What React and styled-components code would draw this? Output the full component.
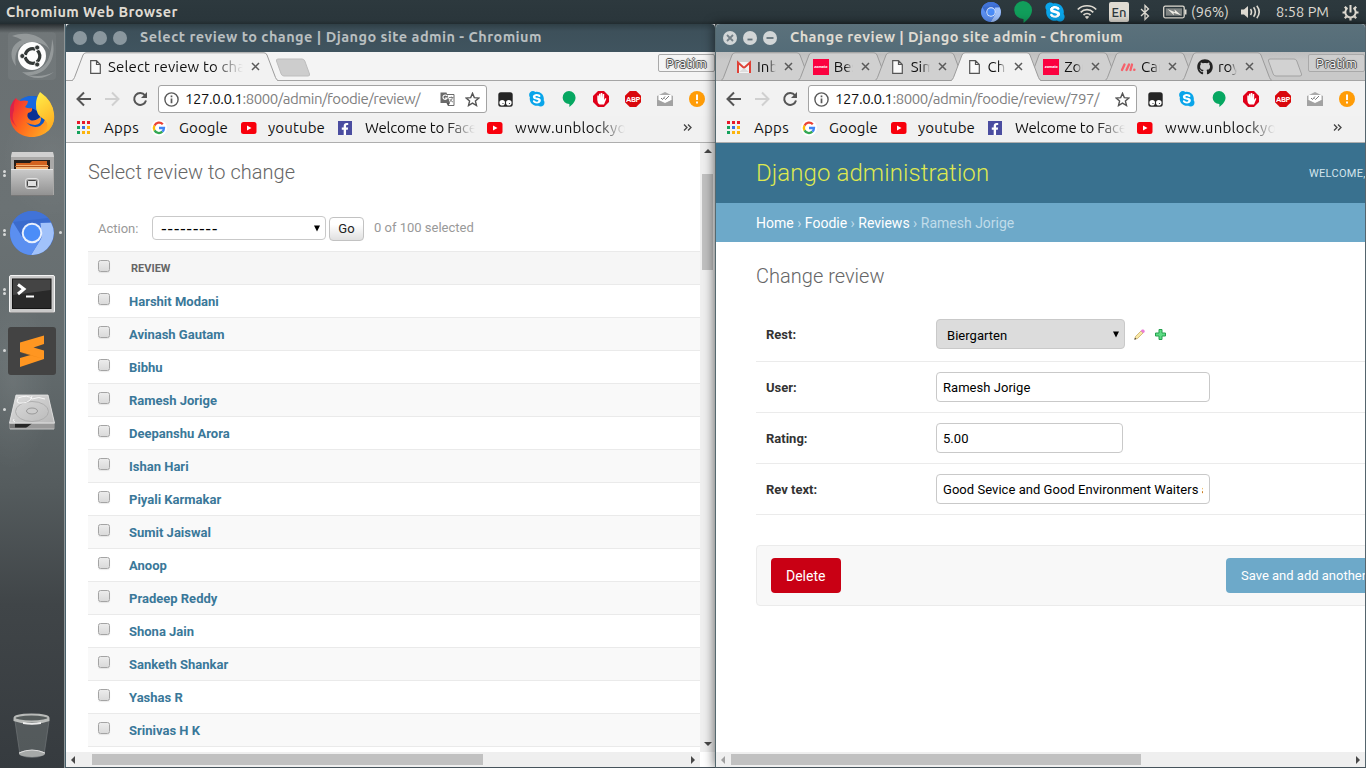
import React, { useLayoutEffect, useRef, useState } from "react";
import styled, { createGlobalStyle, css } from "styled-components";
import { FaGithub, FaSkype, FaFacebookF } from "react-icons/fa";

const ui = `Ubuntu, "Noto Sans", "Open Sans", sans-serif`;
const web = `Roboto, "Liberation Sans", sans-serif`;

const Global = createGlobalStyle`
  * { box-sizing: border-box; }
  html, body { margin: 0; padding: 0; overflow: hidden; }
  svg { display: block; flex: none; }
`;

/* ---------- text that is tracked to a given width ---------- */

const Tracked = styled.span`
  display: inline-block;
  white-space: pre;
  flex: none;
`;

function Track({ width, children }) {
  const ref = useRef(null);
  const [spacing, setSpacing] = useState(0);
  useLayoutEffect(() => {
    const natural = ref.current.getBoundingClientRect().width;
    setSpacing((width - natural) / ref.current.textContent.length);
  }, [width]);
  return (
    <Tracked ref={ref} style={{ letterSpacing: `${spacing}px` }}>
      {children}
    </Tracked>
  );
}

/* ---------- desktop ---------- */

const Desktop = styled.div`
  width: 1366px;
  height: 768px;
  display: flex;
  flex-direction: column;
  overflow: hidden;
  background: #4c5356;
  font-family: ${ui};
`;

const Panel = styled.header`
  height: 24px;
  flex: none;
  display: flex;
  align-items: center;
  padding: 0 7px 0 6px;
  background: linear-gradient(#2d393e, #2a363b 85%, #222c30);
  color: #dfdbd2;
  font-size: 14.5px;
  line-height: 24px;
`;

const PanelTitle = styled.div`
  font-weight: 700;
  flex: 1;
`;

const Indicators = styled.div`
  display: flex;
  align-items: center;
  height: 24px;
`;

const Indicator = styled.div`
  width: ${(p) => p.$w}px;
  flex: none;
  display: flex;
  justify-content: ${(p) => (p.$start ? "flex-start" : "center")};
  margin-right: ${(p) => p.$mr || 0}px;
`;

const LangBadge = styled.div`
  width: 20px;
  height: 20px;
  border-radius: 2px;
  background: #dfdbd2;
  color: #2d383d;
  font-size: 13px;
  font-weight: 500;
  line-height: 20px;
  text-align: center;
`;

const Workspace = styled.div`
  flex: 1;
  min-height: 0;
  display: flex;
`;

const Launcher = styled.nav`
  width: 65px;
  flex: none;
  display: flex;
  flex-direction: column;
  justify-content: space-between;
  padding: 2px 0 3px;
  border-right: 1px solid #8e9496;
  background:
    linear-gradient(rgba(20, 25, 28, 0.75), transparent 9px),
    radial-gradient(40px 90px at 20% 48%, rgba(255, 255, 255, 0.07), transparent),
    radial-gradient(50px 60px at 80% 18%, rgba(255, 255, 255, 0.05), transparent),
    linear-gradient(#6a7072, #6b7274 25%, #636b6d 45%, #555c5e 62%, #404548 78%, #363b3f);
`;

const LauncherGroup = styled.div`
  display: flex;
  flex-direction: column;
`;

const LauncherSlot = styled.div`
  height: 59px;
  width: 64px;
  display: flex;
  align-items: center;
`;

const Pips = styled.div`
  width: 8px;
  display: flex;
  flex-direction: column;
  align-items: flex-end;
  gap: 0.5px;
  padding-right: 2px;
`;

const Pip = styled.i`
  width: 3.5px;
  height: 3.5px;
  border-radius: 50%;
  background: #d6d8d8;
  display: block;
`;

/* ---------- browser window ---------- */

const Window = styled.section`
  width: ${(p) => (p.$active ? 651 : 650)}px;
  flex: none;
  display: flex;
  flex-direction: column;
  border-left: 1px solid #47606b;
  border-bottom: 1px solid #46535b;
  background: #f1f1f1;
  ${(p) =>
    p.$active &&
    css`
      border-right: 1px solid #55656d;
      border-left-color: #55696f;
      position: relative;
      box-shadow: -1px 0 11px rgba(0, 0, 0, 0.55);
      border-radius: 4px 4px 0 0;
    `}
`;

const TitleBar = styled.div`
  height: 28px;
  flex: none;
  display: flex;
  align-items: center;
  padding-left: 7px;
  gap: 6px;
  background: ${(p) =>
    p.$active ? "linear-gradient(#5b717b, #546c78)" : "linear-gradient(#2f3f46, #3d505a 25%, #40545f)"};
  color: ${(p) => (p.$active ? "#dfdbd2" : "#b9bfc0")};
  border-radius: 4px 4px 0 0;
  font-size: 14.5px;
  font-weight: 700;
  line-height: 26px;
`;

const TitleText = styled.div`
  margin: 0 0 2px 7px;
`;

const TabStrip = styled.div`
  height: 29px;
  flex: none;
  display: flex;
  align-items: flex-start;
  padding-left: ${(p) => (p.$active ? 5 : 6)}px;
  background: ${(p) => (p.$active ? "linear-gradient(#bfbfbf, #c9c9c9 30%)" : "#f4f4f4")};
  box-shadow: inset 0 -1px #a5a5a5;
`;

const TabBox = styled.div`
  width: ${(p) => p.$w}px;
  height: 29px;
  flex: none;
  position: relative;
  z-index: ${(p) => (p.$front ? 3 : 1)};
  margin-right: -13.2px;
  display: flex;
  align-items: center;
  padding: 0 17px 0 15px;
`;

const TabShape = styled.svg`
  position: absolute;
  left: 0;
  top: 0;
  z-index: -1;
`;

const TabIcon = styled.div`
  width: 16px;
  height: 16px;
  flex: none;
  display: flex;
  align-items: center;
  justify-content: center;
  margin-right: 5px;
`;

const fade = (px) => css`
  mask-image: linear-gradient(to left, transparent, #000 ${px}px);
`;

const TabLabel = styled.div`
  flex: 1;
  overflow: hidden;
  font-size: 15px;
  line-height: 29px;
  color: #111;
  white-space: nowrap;
  ${(p) => fade(p.$wide ? 30 : 8)}
`;

const TabClose = styled.div`
  width: 18px;
  display: flex;
  justify-content: flex-end;
  padding-right: 1px;
`;

const NewTabWrap = styled.div`
  margin: 6px 0 0 ${(p) => (p.$active ? 8 : 10)}px;
`;

const ProfileButton = styled.div`
  width: 57px;
  height: 18px;
  margin: 2px 0 0 auto;
  border: 1px solid #a9a9a9;
  border-radius: 2px;
  background: ${(p) => (p.$active ? "#cecece" : "#f5f5f5")};
  color: #fafafa;
  font-size: 13px;
  line-height: 17px;
  padding-left: 7px;
  text-shadow: -1px 0 #555, 1px 0 #555, 0 -1px #555, 0 1px #555, 0 0 2px #444;
`;

const NavBar = styled.div`
  height: 35px;
  flex: none;
  display: flex;
  align-items: center;
  padding: 1px 0 0 4px;
  background: #f2f2f2;
`;

const NavButton = styled.div`
  width: 28px;
  display: flex;
  justify-content: center;
`;

const UrlBox = styled.div`
  width: 329px;
  height: 28px;
  margin: 0 2px 0 4px;
  border: 1px solid #a3a3a3;
  border-radius: 3px;
  background: #fff;
  display: flex;
  align-items: center;
  padding: 0 6px 0 5px;
  font-size: 15px;
  line-height: 26px;
  color: #808080;
`;

const UrlText = styled.div`
  flex: 1;
  margin-left: 6px;
  white-space: nowrap;
  b { color: #111; font-weight: 400; }
`;

const UrlActions = styled.div`
  display: flex;
  gap: 10px;
`;

const Extension = styled.div`
  width: 32px;
  display: flex;
  justify-content: center;
`;

const BookmarkBar = styled.div`
  height: 27px;
  flex: none;
  display: flex;
  align-items: center;
  padding: 0 0 3px 11px;
  background: #f1f1f1;
  border-bottom: 1px solid #aeaeae;
  font-size: 15px;
  line-height: 24px;
  color: #111;
`;

const Bookmark = styled.div`
  width: ${(p) => p.$w}px;
  flex: none;
  display: flex;
  align-items: center;
`;

const BookmarkLabel = styled.div`
  margin-left: ${(p) => p.$gap}px;
  overflow: hidden;
  ${(p) =>
    p.$clip &&
    css`
      width: ${p.$clip}px;
      ${fade(28)}
    `}
`;

const Viewport = styled.div`
  flex: 1;
  min-height: 0;
  display: flex;
  background: #fff;
  overflow: hidden;
  font-family: ${web};
`;

const Page = styled.main`
  flex: 1;
  min-width: 0;
  overflow: hidden;
`;

const VScroll = styled.div`
  width: 15px;
  flex: none;
  background: #efefef;
  display: flex;
  flex-direction: column;
  align-items: center;
  padding: 5px 0 5px;
`;

const VThumb = styled.div`
  width: 11px;
  height: 96px;
  margin: 20px 0 auto;
  background: #c1c1c1;
`;

const HScroll = styled.div`
  height: 15px;
  flex: none;
  display: flex;
  align-items: center;
  background: #efefef;
  padding: 0 4px;
  margin-right: ${(p) => p.$corner}px;
`;

const HScrollRow = styled.div`
  flex: none;
  background: #fff;
`;

const HThumb = styled.div`
  width: ${(p) => p.$w}px;
  height: 11px;
  margin: 0 auto 0 ${(p) => p.$ml}px;
  background: #c1c1c1;
`;

/* ---------- admin pages ---------- */

const Heading = styled.h1`
  margin: 0;
  font-size: 20px;
  font-weight: 300;
  line-height: 24px;
  letter-spacing: 0.02px;
  color: #666;
`;

const ListPage = styled.div`
  padding: 17px 0 0 22px;
`;

const Actions = styled.div`
  height: 67px;
  display: flex;
  align-items: flex-start;
  padding: 32px 0 0 10px;
  font-size: 13px;
  color: #999;
`;

const ActionLabel = styled.span`
  width: 54px;
  line-height: 26px;
`;

const ActionSelect = styled.div`
  width: 174px;
  height: 24px;
  border: 1px solid #c9c9c9;
  border-radius: 4px;
  display: flex;
  align-items: center;
  justify-content: space-between;
  padding: 0 5px 0 8px;
  color: #000;
`;

const Dashes = styled.span`
  font: 16px/22px "DejaVu Sans", sans-serif;
  padding-top: 1px;
`;

const GoButton = styled.button`
  width: 35px;
  height: 24px;
  margin: 1px 0 0 3px;
  padding: 0 0 2px;
  border: 1px solid #c2c2c2;
  border-radius: 4px;
  background: linear-gradient(#fff 30%, #e0e0e0);
  color: #222;
  font: 13px ${web};
`;

const Counter = styled.span`
  margin-left: 10px;
  line-height: 24px;
`;

const HeadRow = styled.div`
  height: 34px;
  border-top: 1px solid #eaeaea;
  border-bottom: 1px solid #eaeaea;
  background: #f6f6f6;
  display: flex;
  align-items: flex-start;
  padding: 8px 0 0 10px;
  color: #666;
  font-size: 11px;
  font-weight: 700;
  line-height: 17px;
`;

const Row = styled.div`
  height: 33px;
  border-bottom: 1px solid #eaeaea;
  background: ${(p) => (p.$odd ? "#fff" : "#f9f9f9")};
  display: flex;
  padding: 8px 0 0 10px;
  color: #3a7899;
  font-size: 13px;
  font-weight: 700;
  line-height: 17px;
`;

const Checkbox = styled.span`
  width: 12px;
  height: 12px;
  margin-right: ${(p) => p.$mr}px;
  flex: none;
  border: 1px solid #a4a4a4;
  border-radius: 2.5px;
  background: linear-gradient(#ececec, #dadada);
  box-shadow: 0 1px 1px rgba(0, 0, 0, 0.08);
`;

const AdminHeader = styled.div`
  height: 60px;
  background: #39718f;
  display: flex;
  align-items: center;
  padding-left: 40px;
  overflow: hidden;
`;

const Brand = styled.div`
  width: 553px;
  flex: none;
  font-size: 24px;
  font-weight: 300;
  letter-spacing: 0.08px;
  color: #dfe94f;
  line-height: 28px;
`;

const UserTools = styled.div`
  font-size: 11px;
  letter-spacing: 0.3px;
  color: #d3e4ec;
  white-space: nowrap;
`;

const Crumbs = styled.div`
  height: 39px;
  background: #6da9c9;
  padding-left: 40px;
  font-size: 14px;
  line-height: 40px;
  color: #c0dcea;
  b { font-weight: 400; color: #fff; }
`;

const FormPage = styled.div`
  padding: 22px 0 0 40px;
`;

const FormRows = styled.div`
  margin: 21px 0 30px;
`;

const FormRow = styled.div`
  height: ${(p) => (p.$first ? 53 : 51)}px;
  border-bottom: 1px solid #ebebeb;
  display: flex;
  align-items: center;
  padding: 0 0 ${(p) => (p.$first ? 2 : 0)}px 10px;
`;

const Label = styled.label`
  width: 170px;
  font-size: 13px;
  font-weight: 700;
  color: #333;
`;

const Field = styled.div`
  width: ${(p) => p.$w}px;
  height: 30px;
  border: 1px solid #c9c9c9;
  border-radius: 4px;
  padding: 0 6px;
  font-size: 13px;
  letter-spacing: 0.04px;
  line-height: 29px;
  color: #000;
`;

const FieldText = styled.div`
  overflow: hidden;
  white-space: nowrap;
`;

const SelectField = styled(Field)`
  background: #dcdcdc;
  display: flex;
  justify-content: space-between;
  padding: 1px 5px 0 10px;
  margin-right: 9px;
`;

const SelectArrow = styled.span`
  padding-top: 10px;
`;

const RelatedIcons = styled.div`
  display: flex;
  align-items: center;
  gap: 10px;
`;

const SubmitRow = styled.div`
  width: 700px;
  height: 61px;
  border: 1px solid #ebebeb;
  border-radius: 4px;
  background: #f8f8f8;
  display: flex;
  padding: 12px 14px;
`;

const SubmitButton = styled.button`
  width: ${(p) => p.$w}px;
  height: 35px;
  flex: none;
  padding: 0 0 0 15px;
  border: 0;
  border-radius: 4px;
  text-align: left;
  white-space: nowrap;
  background: ${(p) => (p.$danger ? "#c90014" : "#6da9c9")};
  color: #fff;
  font: ${(p) => (p.$danger ? 14 : 13)}px ${web};
  margin-right: 385px;
`;

/* ---------- icons ---------- */

const Chromium = ({ size }) => (
  <svg width={size} height={size} viewBox="0 0 44 44">
    <circle cx="22" cy="22" r="22" fill="#3f70d4" />
    <path d="M3 11A22 22 0 0 1 41 11L22 12L14 28Z" fill="#4674d4" />
    <path d="M3 11A22 22 0 0 1 41 11.5L22 11.5L12 17Z" fill="#4173d8" />
    <path d="M41 11.5A22 22 0 0 1 21 44L32 26L30.5 12Z" fill="#a1c2fa" />
    <path d="M3 11A22 22 0 0 0 21 44L31 28L13 27Z" fill="#5b8ff0" />
    <path d="M3 11L14 29L13 19L22 11.5H41L38 7Z" fill="#3564c4" opacity=".55" />
    <circle cx="22" cy="22" r="10.3" fill="#eaf1fd" />
    <circle cx="22" cy="22" r="8.3" fill="#4b8df8" />
  </svg>
);

const Hangouts = ({ w = 18, h = 22, color = "#119e5b" }) => (
  <svg width={w} height={h} viewBox="0 0 18 22">
    <path d="M9 0a9 9 0 0 1 9 9c0 5.500-4 9.500-8.500 13v-4A9 9 0 0 1 9 0Z" fill={color} />
  </svg>
);

const SkypeWrap = styled.div`
  width: ${(p) => p.$s}px;
  height: ${(p) => p.$s}px;
  display: flex;
  align-items: center;
  justify-content: center;
  color: #0aa5ea;
  background: radial-gradient(circle, #fff 42%, transparent 45%);
`;
const Skype = ({ s }) => (
  <SkypeWrap $s={s}>
    <FaSkype size={s * 1.1} />
  </SkypeWrap>
);

const Wifi = () => (
  <svg width="20" height="16" viewBox="0 0 20 16" fill="none" stroke="#dfdbd2" strokeWidth="1.700">
    <path d="M.8 5.500C5.500.5 14.500.5 19.200 5.500M3.700 8.300C7.200 4.800 12.800 4.800 16.300 8.300M6.500 11C8.500 9.200 11.500 9.200 13.500 11" />
    <path d="M10 15.200L7.800 12.800Q10 11.300 12.200 12.800Z" fill="#dfdbd2" stroke="none" />
  </svg>
);

const Bluetooth = () => (
  <svg width="10" height="17" viewBox="0 0 10 17" fill="none" stroke="#dfdbd2" strokeWidth="1.300">
    <path d="M1 5L8.500 12L5 15.500V1.500L8.500 5L1 12" />
  </svg>
);

const Battery = () => (
  <svg width="24" height="14" viewBox="0 0 24 14">
    <rect x=".7" y="1.200" width="20.500" height="11.600" rx="1.500" fill="none" stroke="#dfdbd2" strokeWidth="1.300" />
    <path d="M22 4.500h1.500v5H22z" fill="#dfdbd2" />
    <path d="M2.800 3.300H19V10.700H2.800z" fill="#7f8483" />
    <path d="M4.500 4L12 7.300L11.500 4.500L18.500 10.500L10.500 7.800L11 10.200Z" fill="#f1eee6" />
  </svg>
);

const Sound = () => (
  <svg width="20" height="16" viewBox="0 0 20 16" fill="none" stroke="#dfdbd2" strokeWidth="1.600">
    <path d="M0 5.500H3L7 2V14L3 10.500H0Z" fill="#dfdbd2" stroke="none" />
    <path d="M9.500 5Q11.500 8 9.500 11M12.600 3.300Q16 8 12.600 12.700M15.800 1.800Q20.600 8 15.800 14.200" />
  </svg>
);

const Gear = () => (
  <svg width="17" height="17" viewBox="0 0 17 17" fill="none" stroke="#dfdbd2">
    <path d="M5.500 4A5.200 5.200 0 1 0 11.500 4" strokeWidth="2" />
    <path d="M8.500 1V8.500" strokeWidth="2" />
    <path d="M.5 8.500H3M14 8.500H16.500M2.800 2.800L4.600 4.600M14.200 2.800L12.400 4.600M2.800 14.200L4.600 12.400M14.200 14.200L12.400 12.400M8.500 14V16.500" strokeWidth="2.200" />
  </svg>
);

const UbuntuIcon = () => (
  <svg width="48" height="48" viewBox="0 0 48 48">
    <rect width="48" height="48" rx="4" fill="#fff" opacity=".05" />
    <path d="M4 4C20-2 40 4 43 23Q42 12 26 10C12 9 5 20 8 34C0 24 3 12 14 8Q9 5 4 4Z" fill="#fff" opacity=".25" />
    <path d="M44 7C50 26 38 44 20 43Q34 46 46 40Q30 52 14 40Q32 42 40 28Q44 18 44 7Z" fill="#fff" opacity=".25" />
    <circle cx="24" cy="24" r="14" fill="#fdfdfd" />
    <circle cx="24.500" cy="24" r="7.300" fill="none" stroke="#333837" strokeWidth="3.200" strokeDasharray="13.300 2" strokeDashoffset="-1" transform="rotate(60 24.500 24)" />
    <g fill="#333837" stroke="#fdfdfd" strokeWidth=".8">
      <circle cx="14.300" cy="24" r="2.500" />
      <circle cx="29.200" cy="15.500" r="2.500" />
      <circle cx="29.200" cy="32.500" r="2.500" />
    </g>
  </svg>
);

const Firefox = () => (
  <svg width="48" height="48" viewBox="0 0 48 48">
    <defs>
      <linearGradient id="fx" x1="0" y1="0.200" x2="1" y2=".8">
        <stop offset="0" stopColor="#f0203c" />
        <stop offset=".45" stopColor="#ff6a1c" />
        <stop offset="1" stopColor="#ffb526" />
      </linearGradient>
      <linearGradient id="fy" x1="0" y1="0" x2=".3" y2="1">
        <stop offset="0" stopColor="#fff04a" />
        <stop offset="1" stopColor="#ffae22" />
      </linearGradient>
    </defs>
    <circle cx="24.500" cy="22" r="17" fill="#0b56c8" />
    <path d="M24 5A18 18 0 0 1 36 10L33 26L24 33L16 18L12 9Q17 5 24 5Z" fill="#1768e0" />
    <path d="M22 17Q30 18 32 26L25 31L17 24Z" fill="#0a2f94" />
    <path d="M8 7Q9 9 12 10Q16 9 20 10Q20 13 17 16Q20 18 24 17Q25 21 20 22Q18 26 22 29Q26 31 33 26Q34 33 27 34Q20 33 18 31Q24 38 32 35Q40 30 37 17L32 2Q44 9 46 23C48 36 37 46 24 46C10 46 2 36 2 25Q1 13 8 7Z" fill="url(#fx)" />
    <path d="M32 1Q45 10 46 23Q47 36 37 42Q42 34 37 29Q27 24 28 13Q28 7 32 1Z" fill="url(#fy)" />
    <path d="M8 7Q5 13 6 19Q2 28 9 36Q3 31 2 25Q1 13 8 7Z" fill="#d31c50" opacity=".7" />
  </svg>
);

const Files = () => (
  <svg width="48" height="48" viewBox="0 0 48 48">
    <defs>
      <linearGradient id="fi" x1="0" y1="0" x2="0" y2="1">
        <stop offset="0" stopColor="#c8c8c8" />
        <stop offset="1" stopColor="#929292" />
      </linearGradient>
    </defs>
    <path d="M4 2H45L46 7V45H3V7Z" fill="#aaa9a8" />
    <path d="M4 2H45L46 7H3Z" fill="#d0d0d0" />
    <path d="M6 10H42V20H6Z" fill="#271f1b" />
    <path d="M8 13H22L24 11H39V18H8Z" fill="#d2621f" />
    <path d="M8 15H40V20H8Z" fill="#f5b577" />
    <path d="M7 16H41V17H7Z" fill="#b5521a" />
    <path d="M3 20H45V45H3Z" fill="url(#fi)" />
    <path d="M3 19.500H45" stroke="#e5e5e5" />
    <rect x="17.500" y="28.500" width="13" height="10" rx="2.500" fill="#aaa" stroke="#e2e2e2" />
    <rect x="19.500" y="30.500" width="9" height="6" rx="1" fill="#e0e0e0" stroke="#444" />
    <path d="M3 45.500H45" stroke="#777" />
  </svg>
);

const Terminal = () => (
  <svg width="48" height="48" viewBox="0 0 48 48">
    <rect x="1.500" y="7.500" width="45" height="37" rx="1.500" fill="#c9c9c9" stroke="#f4f4f4" />
    <rect x="4.500" y="11" width="38.500" height="29.500" fill="#292929" stroke="#141414" />
    <path d="M5 11.500H42.500V22L5 27Z" fill="#4b4b4b" opacity=".8" />
    <path d="M10 16.500L16 21L10 26" fill="none" stroke="#fff" strokeWidth="3" />
    <path d="M18 28.500H26" stroke="#fff" strokeWidth="2" />
    <path d="M2 44.500H46" stroke="#999" />
  </svg>
);

const Sublime = () => (
  <svg width="48" height="48" viewBox="0 0 48 48">
    <rect width="48" height="48" rx="3" fill="#434343" />
    <path d="M12 15.500L36 8.500V17L25.500 20.500L36 23.500V32L12 40V31L22.500 28L12 25Z" fill="#ff9621" />
    <path d="M22.500 28L36 32L12 25.500Z" fill="#e98410" />
  </svg>
);

const Disk = () => (
  <svg width="48" height="48" viewBox="0 0 48 48">
    <defs>
      <linearGradient id="dk" x1="0" y1="0" x2="1" y2="1">
        <stop offset="0" stopColor="#dedede" />
        <stop offset="1" stopColor="#b8b8b8" />
      </linearGradient>
    </defs>
    <path d="M8 9H40L46.500 37V43H1.500V37Z" fill="#a5a5a5" />
    <path d="M8 9H40L46.500 37H1.500Z" fill="url(#dk)" stroke="#e6e6e6" strokeWidth=".8" />
    <ellipse cx="24" cy="25.500" rx="16.500" ry="10" fill="none" stroke="#aaa" strokeWidth=".9" />
    <ellipse cx="24" cy="25" rx="5.500" ry="3" fill="#ccc" stroke="#999" />
    <path d="M10 12Q20 8 24 13Q31 10 37 13M10 13Q7 18 15 17Q23 16 24 10M6 33Q4 35 7 36" stroke="#fafafa" fill="none" strokeWidth=".9" />
    <path d="M2 37.500H46V42.500H2Z" fill="#777" />
    <path d="M7 37.500H24V41.500H7Z" fill="#272727" />
    <path d="M24 37.500H46V42H18Z" fill="#999" />
    <path d="M1.500 37.300H46.500M2 43H46" stroke="#ddd" strokeWidth=".8" />
  </svg>
);

const Trash = () => (
  <svg width="48" height="48" viewBox="0 0 48 48">
    <path d="M7 9L12 43Q24 48 36 43L41 9Z" fill="#89908f" opacity=".35" stroke="#c7cbcb" strokeWidth=".8" />
    <ellipse cx="24" cy="41.500" rx="13" ry="3.500" fill="#a6a9a8" />
    <path d="M11 41Q24 35 37 41" fill="none" stroke="#ddd" />
    <ellipse cx="23.500" cy="6" rx="17" ry="3.500" fill="#555b5b" stroke="#b8bab8" strokeWidth="2" />
    <path d="M5.500 6.500Q24 15 41.500 6.500V9Q24 15.500 5.500 9Z" fill="#babcba" />
    <path d="M15 10Q24 12 33 10V12Q24 13.500 15 12Z" fill="#ececec" />
  </svg>
);

const WinButton = ({ kind, active }) => (
  <svg width="14" height="14" viewBox="0 0 14 14">
    <circle cx="7" cy="7" r="7" fill={active ? "#d2d6d7" : "#8a979e"} />
    {active && kind === "x" && <path d="M4 4L10 10M10 4L4 10" stroke="#748188" strokeWidth="1.800" />}
    {active && kind === "min" && <path d="M4.500 8.500H9.500" stroke="#63737b" strokeWidth="1.800" />}
    {active && kind === "max" && <path d="M3.500 7H10.500" stroke="#63737b" strokeWidth="1.800" />}
  </svg>
);

const PageGlyph = () => (
  <svg width="11" height="14" viewBox="0 0 11 14" fill="none" stroke="#555" strokeWidth="1.200">
    <path d="M.7.7H6.500L10.300 4.500V13.300H.7ZM6.500.7V4.500H10.300" fill="#fafafa" />
  </svg>
);

const Gmail = () => (
  <svg width="16" height="16" viewBox="0 0 16 16">
    <path d="M1 3H15V14H1Z" fill="#f3f3f3" />
    <path d="M2 14V3.500L8 9L14 3.500V14" fill="none" stroke="#df4237" strokeWidth="2" />
    <path d="M3 13L8 9L13 13Z" fill="#ddd" />
  </svg>
);

const ZomatoBox = styled.div`
  width: 16px;
  height: 16px;
  background: #fb0140;
  color: #fff;
  font: italic 700 4px/15px ${web};
  text-align: center;
`;
const Zomato = () => <ZomatoBox>zomato</ZomatoBox>;

const Slashes = () => (
  <svg width="16" height="16" viewBox="0 0 16 16">
    <path d="M2 11L4.500 5.500M6.500 11L9 5.500M10.500 11L12 5.500" stroke="#f5616b" strokeWidth="2.300" strokeLinecap="round" />
    <circle cx="14.300" cy="10.800" r="1.300" fill="#f5616b" />
  </svg>
);

const CloseGlyph = () => (
  <svg width="9" height="9" viewBox="0 0 9 9">
    <path d="M1 1L8 8M8 1L1 8" stroke="#5a5a5a" strokeWidth="1.500" />
  </svg>
);

const Back = ({ color = "#555" }) => (
  <svg width="16" height="16" viewBox="0 0 16 16" fill="none" stroke={color} strokeWidth="2">
    <path d="M15 8H2M8 1.500L1.500 8L8 14.500" />
  </svg>
);
const Forward = () => (
  <svg width="16" height="16" viewBox="0 0 16 16" fill="none" stroke="#d0d0d0" strokeWidth="2">
    <path d="M1 8H14M8 1.500L14.500 8L8 14.500" />
  </svg>
);
const Reload = () => (
  <svg width="16" height="16" viewBox="0 0 16 16">
    <path d="M13 4.300A6 6 0 1 0 14 9.500" fill="none" stroke="#555" strokeWidth="2" />
    <path d="M15 1V7H9Z" fill="#555" />
  </svg>
);
const Info = () => (
  <svg width="15" height="15" viewBox="0 0 15 15">
    <circle cx="7.500" cy="7.500" r="6.600" fill="none" stroke="#5a5a5a" strokeWidth="1.400" />
    <path d="M7.500 6.500V11.300M7.500 3.500V5.200" stroke="#5a5a5a" strokeWidth="1.700" />
  </svg>
);
const Star = () => (
  <svg width="15" height="15" viewBox="0 0 15 15">
    <path d="M7.500 1.300L9.300 5.600L13.900 6L10.400 9L11.500 13.500L7.500 11.100L3.500 13.500L4.600 9L1.100 6L5.700 5.600Z" fill="none" stroke="#555" strokeWidth="1.400" />
  </svg>
);
const Translate = () => (
  <svg width="15" height="15" viewBox="0 0 15 15">
    <path d="M5 2.500H14V13.500H8" fill="#fff" stroke="#6a6a6a" />
    <path d="M.5.500H6.500L10 11H.5Z" fill="#6a6a6a" />
    <path d="M7 3.900A2.200 2.200 0 1 0 7.200 6H5" fill="none" stroke="#fff" strokeWidth="1.100" />
    <path d="M9 5.500H13.500M11.300 4.500V5.500M12.500 5.500Q12 8.500 9.500 10M9.800 7Q11 9.500 13 10" fill="none" stroke="#777" strokeWidth=".9" />
    <path d="M6.500 11H10L8 14Z" fill="#555" />
  </svg>
);

const Tamper = () => (
  <svg width="15" height="15" viewBox="0 0 15 15">
    <rect x=".3" y=".3" width="14.400" height="14.400" rx="2.500" fill="#252525" />
    <circle cx="4.200" cy="10.800" r="2.800" fill="#fff" />
    <circle cx="10.800" cy="10.800" r="2.800" fill="#fff" />
    <circle cx="5" cy="11.500" r=".6" fill="#252525" />
    <circle cx="11.500" cy="11.500" r=".6" fill="#252525" />
  </svg>
);
const Hand = () => (
  <svg width="16" height="16" viewBox="0 0 16 16">
    <path d="M5 0H11L16 5V11L11 16H5L0 11V5Z" fill="#e00019" />
    <path d="M4.300 9V4.500H5.800V7.500L6 2.800H7.500V7L7.800 2H9.300V7L9.700 3H11.200V9L12.300 7L13.400 7.700L11 13.500H6.500Q4.300 12 4.300 9Z" fill="#fff" />
  </svg>
);
const AbpBox = styled.div`
  width: 16px;
  height: 16px;
  clip-path: polygon(30% 0, 70% 0, 100% 30%, 100% 70%, 70% 100%, 30% 100%, 0 70%, 0 30%);
  background: #d9070c;
  color: #fff;
  font: 700 7.5px/16px ${ui};
  text-align: center;
  letter-spacing: -0.4px;
`;
const MailCheck = () => (
  <svg width="16" height="14" viewBox="0 0 16 14">
    <path d="M0 4L8 0L16 4V14H0Z" fill="#aaa" />
    <path d="M1.500 3H14.500V8L8 11L1.500 8Z" fill="#fff" />
    <path d="M4 6L5.500 7.500L8 4.500M7.500 6.500L8.500 7.500L12 4" stroke="#777" fill="none" strokeWidth="1" />
    <path d="M0 7.500L8 11.500L16 7.500V14H0Z" fill="#a2a2a2" />
  </svg>
);
const Alert = () => (
  <svg width="16" height="16" viewBox="0 0 16 16">
    <circle cx="8" cy="8" r="8" fill="#ff9c07" />
    <path d="M8 3.500V9M8 10.500V12.500" stroke="#fff" strokeWidth="1.900" />
  </svg>
);

const AppsGrid = () => (
  <svg width="13" height="13" viewBox="0 0 13 13">
    {["#e8182b", "#e8182b", "#e8182b", "#14a25c", "#3a6ee0", "#fcb40c", "#14a25c", "#fcb40c", "#fcb40c"].map((c, i) => (
      <rect key={i} x={(i % 3) * 5} y={Math.floor(i / 3) * 5} width="3" height="3" fill={c} />
    ))}
  </svg>
);
const Google = () => (
  <svg width="16" height="16" viewBox="0 0 16 16">
    <circle cx="8" cy="8" r="8" fill="#fff" />
    <g fill="none" strokeWidth="2.300">
      <path d="M11.800 4.200A5 5 0 0 0 3.500 5.600" stroke="#ea4335" />
      <path d="M3.500 5.600A5 5 0 0 0 3.500 10.400" stroke="#fbbc05" />
      <path d="M3.500 10.400A5 5 0 0 0 11.300 11.700" stroke="#34a853" />
      <path d="M11.300 11.700A5 5 0 0 0 13 8H8" stroke="#4285f4" />
    </g>
  </svg>
);
const YouTube = () => (
  <svg width="16" height="12" viewBox="0 0 16 12">
    <rect width="15.500" height="12" rx="2.500" fill="#f8000c" />
    <path d="M6 3.500L10.500 6L6 8.500Z" fill="#fff" />
  </svg>
);
const FbBox = styled.div`
  width: 14px;
  height: 14px;
  background: #4b4da0;
  color: #fff;
  display: flex;
  justify-content: flex-end;
  align-items: flex-end;
  padding-right: 1px;
`;

const Overflow = () => (
  <svg width="9" height="7" viewBox="0 0 9 7" fill="none" stroke="#444" strokeWidth="1.300">
    <path d="M1 .5L4 3.500L1 6.500M5 .5L8 3.500L5 6.500" />
  </svg>
);

const Arrow = ({ dir, dim }) => {
  const d = { up: "M0 5L4 1L8 5Z", down: "M0 1H8L4 5Z", left: "M5 0V8L1 4Z", right: "M1 0V8L5 4Z" }[dir];
  const vert = dir === "up" || dir === "down";
  return (
    <svg width={vert ? 8 : 6} height={vert ? 6 : 8} viewBox={vert ? "0 0 8 6" : "0 0 6 8"}>
      <path d={d} fill={dim ? "#a0a0a0" : "#484848"} />
    </svg>
  );
};
const SelectGlyph = () => (
  <svg width="6" height="7" viewBox="0 0 6 7">
    <path d="M0 .5H6L3 6.500Z" />
  </svg>
);
const Pencil = () => (
  <svg width="11" height="11" viewBox="0 0 11 11">
    <path d="M.8 10.200L1.500 7.500L7 2L9 4L3.500 9.500Z" fill="#f8e8a5" stroke="#c4a35c" strokeWidth=".7" />
    <path d="M6.700 1.800L8 .5H9.500L10.700 1.700V3L9.300 4.300Z" fill="#ec7ed8" />
    <path d="M.3 10.700L1 8.700L2.300 10Z" fill="#333" />
  </svg>
);
const Plus = () => (
  <svg width="11" height="11" viewBox="0 0 11 11">
    <path d="M4 .5H7V4H10.500V7H7V10.500H4V7H.5V4H4Z" fill="#5edb84" stroke="#25a04e" />
  </svg>
);

/* ---------- composition ---------- */

function Tab({ w, icon, label, front, wide }) {
  const r = w;
  return (
    <TabBox $w={w} $front={front}>
      <TabShape width={w} height="29" viewBox={`0 0 ${w} 29`}>
        <path
          d={`M0 29L1 28Q1.800 27.500 2.500 25.500L11 3Q12 .8 14 .8H${r - 14}Q${r - 12} .8 ${r - 11} 3L${r - 2.500} 25.500Q${r - 1.800} 27.500 ${r - 1} 28L${r} 29Z`}
          fill={front ? "#f2f2f2" : "#d0d0d0"}
        />
        <path
          d={`M0 28.500Q1.500 28 2.500 25.500L11 3Q12 .8 14 .8H${r - 14}Q${r - 12} .8 ${r - 11} 3L${r - 2.500} 25.500Q${r - 1.500} 28 ${r} 28.500${front ? "" : "H0"}`}
          fill="none"
          stroke="#9b9b9b"
        />
      </TabShape>
      <TabIcon>{icon}</TabIcon>
      <TabLabel $wide={wide}>{wide ? <Track width={163}>{label}</Track> : label}</TabLabel>
      <TabClose><CloseGlyph /></TabClose>
    </TabBox>
  );
}

function NewTab({ active }) {
  return (
    <NewTabWrap $active={active}>
      <svg width="36" height="19" viewBox="0 0 36 19">
        <path
          d="M3 1H27Q29 1 29.800 3L34.500 16Q35 18 33 18H9Q7 18 6.200 16L1.500 3Q1 1 3 1Z"
          fill={active ? "#d2d2d2" : "#cdcdcd"}
          stroke={active ? "#a2a2a2" : "#bdbdbd"}
        />
      </svg>
    </NewTabWrap>
  );
}

function Browser({ active, title, titleWidth, tabs, path, pathWidth, translate, children }) {
  return (
    <Window $active={active}>
      <TitleBar $active={active}>
        {["x", "min", "max"].map((k) => <WinButton key={k} kind={k} active={active} />)}
        <TitleText><Track width={titleWidth}>{title}</Track></TitleText>
      </TitleBar>
      <TabStrip $active={active}>
        {tabs.map((t, i) => <Tab key={i} {...t} />)}
        <NewTab active={active} />
        <ProfileButton $active={active}><Track width={41}>Pratim</Track></ProfileButton>
      </TabStrip>
      <NavBar>
        <NavButton><Back /></NavButton>
        <NavButton><Forward /></NavButton>
        <NavButton><Reload /></NavButton>
        <UrlBox>
          <Info />
          <UrlText><Track width={pathWidth}><b>127.0.0.1</b>{path}</Track></UrlText>
          <UrlActions>{translate && <Translate />}<Star /></UrlActions>
        </UrlBox>
        <Extension><Tamper /></Extension>
        <Extension><Skype s={16} /></Extension>
        <Extension><Hangouts w={14} h={16} color="#06a761" /></Extension>
        <Extension><Hand /></Extension>
        <Extension><AbpBox>ABP</AbpBox></Extension>
        <Extension><MailCheck /></Extension>
        <Extension><Alert /></Extension>
      </NavBar>
      <BookmarkBar>
        <Bookmark $w={74}><AppsGrid /><BookmarkLabel $gap={14}><Track width={35}>Apps</Track></BookmarkLabel></Bookmark>
        <Bookmark $w={90}><Google /><BookmarkLabel $gap={12}><Track width={49}>Google</Track></BookmarkLabel></Bookmark>
        <Bookmark $w={97}><YouTube /><BookmarkLabel $gap={11}><Track width={57}>youtube</Track></BookmarkLabel></Bookmark>
        <Bookmark $w={149}><FbBox><FaFacebookF size={12} /></FbBox><BookmarkLabel $gap={13} $clip={110}><Track width={145}>Welcome to Facebook</Track></BookmarkLabel></Bookmark>
        <Bookmark $w={196}><YouTube /><BookmarkLabel $gap={12} $clip={110}><Track width={153}>www.unblockyoutube</Track></BookmarkLabel></Bookmark>
        <Overflow />
      </BookmarkBar>
      {children}
    </Window>
  );
}

const names = [
  "Harshit Modani", "Avinash Gautam", "Bibhu", "Ramesh Jorige", "Deepanshu Arora", "Ishan Hari", "Piyali Karmakar",
  "Sumit Jaiswal", "Anoop", "Pradeep Reddy", "Shona Jain", "Sanketh Shankar", "Yashas R", "Srinivas H K",
];

const apps = [
  { icon: <UbuntuIcon /> },
  { icon: <Firefox /> },
  { icon: <Files />, pips: 2 },
  { icon: <svg width="48" height="48"><g transform="translate(2 2)"><Chromium size={44} /></g></svg>, pips: 2, focused: true },
  { icon: <Terminal />, pips: 2 },
  { icon: <Sublime />, pips: 1 },
  { icon: <Disk />, pips: 1 },
];

export default function App() {
  return (
    <Desktop>
      <Global />
      <Panel>
        <PanelTitle><Track width={172}>Chromium Web Browser</Track></PanelTitle>
        <Indicators>
          <Indicator $w={32}><Chromium size={20} /></Indicator>
          <Indicator $w={32}><Hangouts /></Indicator>
          <Indicator $w={32}><Skype s={20} /></Indicator>
          <Indicator $w={32}><Wifi /></Indicator>
          <Indicator $w={32}><LangBadge>En</LangBadge></Indicator>
          <Indicator $w={20} $mr={8}><Bluetooth /></Indicator>
          <Indicator $w={28} $start><Battery /></Indicator>
          <Indicator $w={50} $start><Track width={38}>(96%)</Track></Indicator>
          <Indicator $w={35} $start><Sound /></Indicator>
          <Indicator $w={66} $start><Track width={53}>8:58 PM</Track></Indicator>
          <Indicator $w={17} $start><Gear /></Indicator>
        </Indicators>
      </Panel>
      <Workspace>
        <Launcher>
          <LauncherGroup>
            {apps.map((a, i) => (
              <LauncherSlot key={i}>
                <Pips>{Array.from({ length: a.pips || 0 }, (_, k) => <Pip key={k} />)}</Pips>
                {a.icon}
                <Pips>{a.focused && <Pip />}</Pips>
              </LauncherSlot>
            ))}
          </LauncherGroup>
          <LauncherSlot><Pips /><Trash /></LauncherSlot>
        </Launcher>

        <Browser
          title="Select review to change | Django site admin - Chromium"
          titleWidth={402}
          tabs={[{ w: 206, icon: <PageGlyph />, label: "Select review to change", front: true, wide: true }]}
          path=":8000/admin/foodie/review/"
          pathWidth={235}
          translate
        >
          <Viewport>
            <Page>
              <ListPage>
                <Heading>Select review to change</Heading>
                <Actions>
                  <ActionLabel>Action:</ActionLabel>
                  <ActionSelect><Dashes><Track width={57}>---------</Track></Dashes><SelectGlyph /></ActionSelect>
                  <GoButton>Go</GoButton>
                  <Counter>0 of 100 selected</Counter>
                </Actions>
                <HeadRow><Checkbox $mr={21} />REVIEW</HeadRow>
                {names.map((n, i) => (
                  <Row key={n} $odd={i % 2 === 0}><Checkbox $mr={19} />{n}</Row>
                ))}
              </ListPage>
            </Page>
            <VScroll><Arrow dir="up" /><VThumb /><Arrow dir="down" /></VScroll>
          </Viewport>
          <HScrollRow>
            <HScroll $corner={15}><Arrow dir="left" /><HThumb $w={391} $ml={16} /><Arrow dir="right" /></HScroll>
          </HScrollRow>
        </Browser>

        <Browser
          active
          title="Change review | Django site admin - Chromium"
          titleWidth={333}
          tabs={[
            { w: 90, icon: <Gmail />, label: "Inbox" },
            { w: 90, icon: <Zomato />, label: "Best" },
            { w: 90, icon: <PageGlyph />, label: "Simple" },
            { w: 90, icon: <PageGlyph />, label: "Change", front: true },
            { w: 90, icon: <Zomato />, label: "Zomato" },
            { w: 90, icon: <Slashes />, label: "Cards" },
            { w: 90, icon: <FaGithub size={16} color="#222" />, label: "royal" },
          ]}
          path=":8000/admin/foodie/review/797/"
          pathWidth={264}
        >
          <Viewport>
            <Page>
              <AdminHeader>
                <Brand>Django administration</Brand>
                <UserTools>WELCOME, PRATIM</UserTools>
              </AdminHeader>
              <Crumbs><b>Home</b> › <b>Foodie</b> › <b>Reviews</b> › Ramesh Jorige</Crumbs>
              <FormPage>
                <Heading>Change review</Heading>
                <FormRows>
                  <FormRow $first>
                    <Label>Rest:</Label>
                    <SelectField $w={189}>Biergarten<SelectArrow><SelectGlyph /></SelectArrow></SelectField>
                    <RelatedIcons><Pencil /><Plus /></RelatedIcons>
                  </FormRow>
                  <FormRow><Label>User:</Label><Field $w={274}>Ramesh Jorige</Field></FormRow>
                  <FormRow><Label>Rating:</Label><Field $w={187}>5.00</Field></FormRow>
                  <FormRow>
                    <Label>Rev text:</Label>
                    <Field $w={274}><FieldText>Good Sevice and Good Environment Waiters are</FieldText></Field>
                  </FormRow>
                </FormRows>
                <SubmitRow>
                  <SubmitButton $w={70} $danger>Delete</SubmitButton>
                  <SubmitButton $w={175}>Save and add another</SubmitButton>
                </SubmitRow>
              </FormPage>
            </Page>
          </Viewport>
          <HScrollRow>
            <HScroll $corner={0}><Arrow dir="left" dim /><HThumb $w={410} $ml={5} /><Arrow dir="right" /></HScroll>
          </HScrollRow>
        </Browser>
      </Workspace>
    </Desktop>
  );
}
